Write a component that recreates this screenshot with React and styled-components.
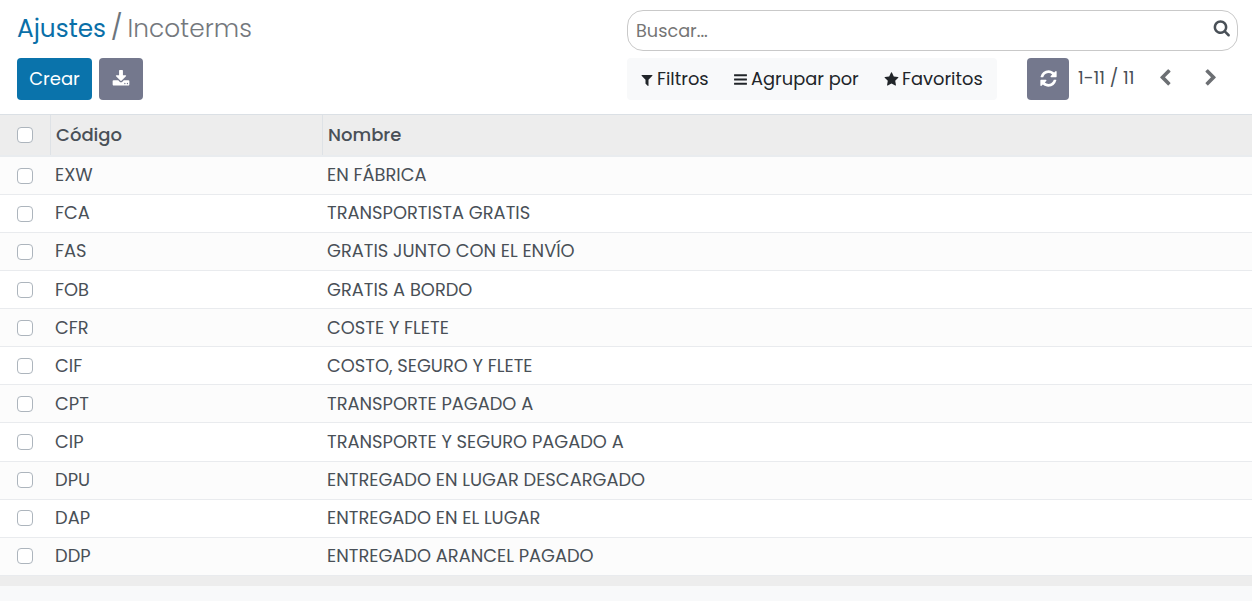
import React from 'react';
import styled, { createGlobalStyle } from 'styled-components';

const GlobalStyle = createGlobalStyle`
  *, *::before, *::after { box-sizing: border-box; }
  html, body { margin: 0; height: 100%; background: #f8f9fa; }
  body {
    font-family: Poppins, Inter, "Noto Sans", sans-serif;
    font-size: 17.87px;
    font-weight: 400;
    color: #495057;
    overflow: hidden;
  }
`;

const ICONS = {
  download: 'M1344 1344q0-26-19-45t-45-19-45 19-19 45 19 45 45 19 45-19 19-45zm256 0q0-26-19-45t-45-19-45 19-19 45 19 45 45 19 45-19 19-45zm128-224v320q0 40-28 68t-68 28h-1472q-40 0-68-28t-28-68v-320q0-40 28-68t68-28h465l135 136q58 56 136 56t136-56l136-136h464q40 0 68 28t28 68zm-325-569q17 41-14 70l-448 448q-18 19-45 19t-45-19l-448-448q-31-29-14-70 17-39 59-39h256v-448q0-26 19-45t45-19h256q26 0 45 19t19 45v448h256q42 0 59 39z',
  refresh: 'M1639 1056q0 5-1 7-64 268-268 434.5t-478 166.5q-146 0-282.5-55t-243.5-157l-129 129q-19 19-45 19t-45-19-19-45v-448q0-26 19-45t45-19h448q26 0 45 19t19 45-19 45l-137 137q71 66 161 102t187 36q134 0 250-65t186-179q11-17 53-117 8-23 30-23h192q13 0 22.5 9.5t9.5 22.5zm25-800v448q0 26-19 45t-45 19h-448q-26 0-45-19t-19-45 19-45l138-138q-148-137-349-137-134 0-250 65t-186 179q-11 17-53 117-8 23-30 23h-199q-13 0-22.5-9.5t-9.5-22.5v-7q65-268 270-434.5t480-166.5q146 0 284 55.5t245 156.5l130-129q19-19 45-19t45 19 19 45z',
  search: 'M1216 832q0-185-131.5-316.5t-316.5-131.5-316.5 131.5-131.5 316.5 131.5 316.5 316.5 131.5 316.5-131.5 131.5-316.5zm512 832q0 52-38 90t-90 38q-54 0-90-38l-343-342q-179 124-399 124-143 0-273.5-55.5t-225-150-150-225-55.5-273.5 55.5-273.5 150-225 225-150 273.5-55.5 273.5 55.5 225 150 150 225 55.5 273.5q0 220-124 399l343 343q37 37 37 90z',
  filter: 'M1595 295q17 41-14 70l-493 493v742q0 42-39 59-13 5-25 5-27 0-45-19l-256-256q-19-19-19-45v-486l-493-493q-31-29-14-70 17-39 59-39h1280q42 0 59 39z',
  bars: 'M1664 1344v128q0 26-19 45t-45 19h-1408q-26 0-45-19t-19-45v-128q0-26 19-45t45-19h1408q26 0 45 19t19 45zm0-512v128q0 26-19 45t-45 19h-1408q-26 0-45-19t-19-45v-128q0-26 19-45t45-19h1408q26 0 45 19t19 45zm0-512v128q0 26-19 45t-45 19h-1408q-26 0-45-19t-19-45v-128q0-26 19-45t45-19h1408q26 0 45 19t19 45z',
  star: 'M1728 647q0 22-26 48l-363 354 86 500q1 7 1 20 0 21-10.5 35.5t-30.5 14.5q-19 0-40-12l-449-236-449 236q-22 12-40 12-21 0-31.5-14.5t-10.5-35.5q0-6 2-20l86-500-364-354q-25-27-25-48 0-37 56-46l502-73 225-455q19-41 49-41t49 41l225 455 502 73q56 9 56 46z',
  left: 'M1427 301l-531 531 531 531q19 19 19 45t-19 45l-166 166q-19 19-45 19t-45-19l-742-742q-19-19-19-45t19-45l742-742q19-19 45-19t45 19l166 166q19 19 19 45t-19 45z',
  right: 'M1363 877l-742 742q-19 19-45 19t-45-19l-166-166q-19-19-19-45t19-45l531-531-531-531q-19-19-19-45t19-45l166-166q19-19 45-19t45 19l742 742q19 19 19 45t-19 45z',
};

const Svg = styled.svg`
  display: block;
  flex: none;
  fill: currentColor;
  overflow: visible;
`;

const Icon = ({ name, size }) => (
  <Svg width={size} height={size} viewBox="0 0 1792 1792" aria-hidden="true">
    <path d={ICONS[name]} />
  </Svg>
);

const Page = styled.div`
  display: flex;
  flex-direction: column;
  height: 601px;
`;

const ControlPanel = styled.header`
  display: grid;
  grid-template-columns: 610px 611px;
  grid-template-rows: 41px 42px;
  row-gap: 7px;
  height: 114px;
  padding: 10px 14px 0 17px;
  background: #fff;
`;

const Breadcrumb = styled.nav`
  display: flex;
  align-items: center;
  height: 36px;
  font-size: 24.8px;
  white-space: nowrap;
`;

const Crumb = styled.span`
  color: ${(p) => (p.$link ? '#0a6fa8' : '#74787d')};
  font-weight: ${(p) => (p.$link ? 400 : 300)};
  letter-spacing: ${(p) => (p.$link ? 0 : 0.1)}px;
`;

const Slash = styled.span`
  width: 21.4px;
  text-align: center;
  font-size: 25px;
  color: #6c757d;
`;

const SearchBox = styled.div`
  display: flex;
  align-items: center;
  justify-content: space-between;
  padding: 0 7px 0 8px;
  border: 1px solid #c9c9c9;
  border-radius: 16px;
  color: #757575;
`;

const Placeholder = styled.span`
  font-size: 17.7px;
`;

const SearchIcon = styled.span`
  color: #495057;
  padding-bottom: 6px;
`;

const Actions = styled.div`
  display: flex;
  gap: 7px;
`;

const Button = styled.button`
  display: flex;
  align-items: center;
  justify-content: center;
  width: ${(p) => p.$width}px;
  height: 42px;
  padding: 0 0 1px;
  border: 0;
  border-radius: 4px;
  background: ${(p) => (p.$primary ? '#0a73ab' : '#74788d')};
  color: #fff;
  font: 400 18px Poppins, Inter, sans-serif;
`;

const Tools = styled.div`
  display: flex;
`;

const FilterGroup = styled.div`
  display: flex;
  width: 370px;
  margin-right: 30px;
  padding-left: 13px;
  border-radius: 4px;
  background: #f8f9fa;
`;

const FilterItem = styled.div`
  display: flex;
  align-items: center;
  gap: 3px;
  width: ${(p) => p.$width}px;
  padding-bottom: 1px;
  color: #212529;
  font-size: 17.83px;
  white-space: nowrap;
  svg { margin-top: 2px; }
`;

const PagerText = styled.span`
  display: flex;
  align-items: center;
  width: 73px;
  padding: 0 0 3px 9px;
  white-space: nowrap;
`;

const PagerButton = styled.span`
  display: flex;
  align-items: center;
  justify-content: center;
  width: ${(p) => p.$width}px;
  padding: 0 0 2px;
  color: #6c6f73;
`;

const HeaderRow = styled.div`
  display: grid;
  grid-template-columns: 51px 272px 1fr;
  height: 43px;
  border-top: 1px solid #dbe0e5;
  border-bottom: 2px solid #e9ecef;
  background: #ededed;
`;

const HeaderCell = styled.div`
  display: flex;
  align-items: center;
  padding: 0 0 ${(p) => (p.$check ? 0 : 2)}px ${(p) => (p.$check ? 17 : 5)}px;
  border-right: ${(p) => (p.$last ? '0' : '1px solid #dee2e6')};
  font-size: 18px;
  font-weight: 500;
`;

const Body = styled.div`
  display: grid;
  grid-template-rows: repeat(11, 1fr);
  height: 418.7px;
`;

const Row = styled.div`
  display: grid;
  grid-template-columns: 55px 272px 1fr;
  align-items: center;
  border-bottom: 1px solid #e9ebee;
  background: ${(p) => (p.$odd ? '#fcfcfc' : '#fff')};
`;

const CheckCell = styled.div`
  padding: 0 0 0 17px;
`;

const Check = styled.span`
  display: block;
  width: 16px;
  height: 16px;
  border: 1px solid #adb5bd;
  border-radius: 4px;
  background: #fff;
`;

const Cell = styled.div`
  padding-bottom: 1.36px;
  white-space: nowrap;
`;

const Footer = styled.div`
  height: 10.5px;
  background: #ededed;
`;

const ROWS = [
  ['EXW', 'EN FÁBRICA'],
  ['FCA', 'TRANSPORTISTA GRATIS'],
  ['FAS', 'GRATIS JUNTO CON EL ENVÍO'],
  ['FOB', 'GRATIS A BORDO'],
  ['CFR', 'COSTE Y FLETE'],
  ['CIF', 'COSTO, SEGURO Y FLETE'],
  ['CPT', 'TRANSPORTE PAGADO A'],
  ['CIP', 'TRANSPORTE Y SEGURO PAGADO A'],
  ['DPU', 'ENTREGADO EN LUGAR DESCARGADO'],
  ['DAP', 'ENTREGADO EN EL LUGAR'],
  ['DDP', 'ENTREGADO ARANCEL PAGADO'],
];

export default function App() {
  return (
    <Page>
      <GlobalStyle />
      <ControlPanel>
        <Breadcrumb>
          <Crumb $link>Ajustes</Crumb>
          <Slash>/</Slash>
          <Crumb>Incoterms</Crumb>
        </Breadcrumb>
        <SearchBox>
          <Placeholder>Buscar...</Placeholder>
          <SearchIcon><Icon name="search" size={17.5} /></SearchIcon>
        </SearchBox>
        <Actions>
          <Button $primary $width={75}>Crear</Button>
          <Button $width={44} aria-label="Exportar"><Icon name="download" size={18} /></Button>
        </Actions>
        <Tools>
          <FilterGroup>
            <FilterItem $width={93}><Icon name="filter" size={14} />Filtros</FilterItem>
            <FilterItem $width={151}><Icon name="bars" size={15} />Agrupar por</FilterItem>
            <FilterItem $width={110}><Icon name="star" size={15} />Favoritos</FilterItem>
          </FilterGroup>
          <Button $width={42} aria-label="Actualizar"><Icon name="refresh" size={19} /></Button>
          <PagerText>1-11 / 11</PagerText>
          <PagerButton $width={45}><Icon name="left" size={18} /></PagerButton>
          <PagerButton $width={47}><Icon name="right" size={18} /></PagerButton>
        </Tools>
      </ControlPanel>
      <HeaderRow>
        <HeaderCell $check><Check /></HeaderCell>
        <HeaderCell>Código</HeaderCell>
        <HeaderCell $last>Nombre</HeaderCell>
      </HeaderRow>
      <Body>
        {ROWS.map(([code, name], i) => (
          <Row key={code} $odd={i % 2 === 0}>
            <CheckCell><Check /></CheckCell>
            <Cell>{code}</Cell>
            <Cell>{name}</Cell>
          </Row>
        ))}
      </Body>
      <Footer />
    </Page>
  );
}
